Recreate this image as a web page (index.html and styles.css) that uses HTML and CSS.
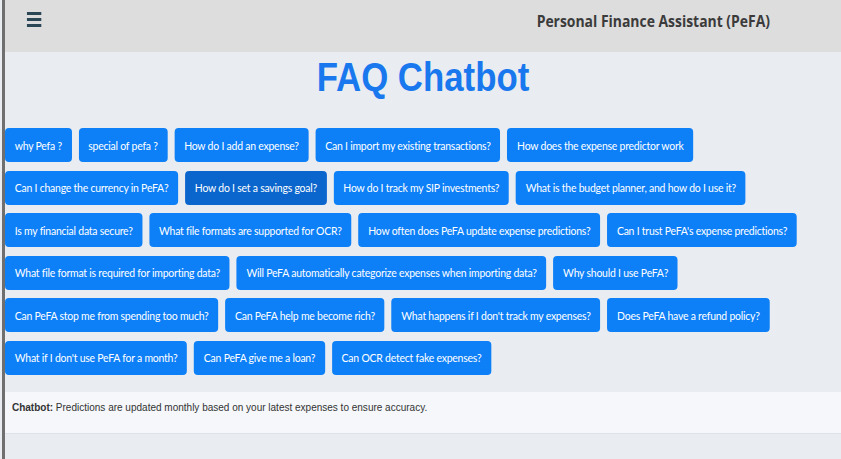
FILE: index.html
```html
<!DOCTYPE html>
<html lang="en">
<head>
<meta charset="utf-8">
<title>FAQ Chatbot</title>
<link rel="stylesheet" href="styles.css">
</head>
<body>
<div class="frame">
  <div class="page">
    <header class="topbar">
      <button class="menu" aria-label="Menu">
        <svg width="17" height="15" viewBox="0 0 17 15" preserveAspectRatio="none"><rect x="0" y="0" width="17" height="3" fill="#2b4654"/><rect x="0" y="6" width="17" height="3" fill="#2b4654"/><rect x="0" y="12" width="17" height="3" fill="#2b4654"/></svg>
      </button>
      <div class="brand">Personal Finance Assistant (PeFA)</div>
    </header>
    <main class="content">
      <h1 class="title">FAQ Chatbot</h1>
      <div class="faq">
        <button class="q">why Pefa ?</button>
        <button class="q">special of pefa ?</button>
        <button class="q">How do I add an expense?</button>
        <button class="q">Can I import my existing transactions?</button>
        <button class="q">How does the expense predictor work</button>
        <button class="q">Can I change the currency in PeFA?</button>
        <button class="q active">How do I set a savings goal?</button>
        <button class="q">How do I track my SIP investments?</button>
        <button class="q">What is the budget planner, and how do I use it?</button>
        <button class="q">Is my financial data secure?</button>
        <button class="q">What file formats are supported for OCR?</button>
        <button class="q">How often does PeFA update expense predictions?</button>
        <button class="q">Can I trust PeFA's expense predictions?</button>
        <button class="q">What file format is required for importing data?</button>
        <button class="q">Will PeFA automatically categorize expenses when importing data?</button>
        <button class="q">Why should I use PeFA?</button>
        <button class="q">Can PeFA stop me from spending too much?</button>
        <button class="q">Can PeFA help me become rich?</button>
        <button class="q">What happens if I don't track my expenses?</button>
        <button class="q">Does PeFA have a refund policy?</button>
        <button class="q">What if I don't use PeFA for a month?</button>
        <button class="q">Can PeFA give me a loan?</button>
        <button class="q">Can OCR detect fake expenses?</button>
      </div>
      <div class="response"><b>Chatbot:</b> Predictions are updated monthly based on your latest expenses to ensure accuracy.</div>
    </main>
  </div>
</div>
</body>
</html>
```
FILE: styles.css
```css
html, body {
  margin: 0;
  padding: 0;
  height: 100%;
}
body {
  background: #e9edf2;
  font-family: "Liberation Sans", Arial, sans-serif;
  overflow: hidden;
}
.frame {
  margin-left: 2px;
  border-left: 3px solid #6f6f6f;
  min-height: 100%;
  box-sizing: border-box;
  overflow: hidden;
}
/* the whole view is rendered slightly condensed horizontally */
.page {
  width: calc(100% / 0.87);
  transform: scaleX(0.87);
  transform-origin: 0 0;
}
.topbar {
  height: 52px;
  background: #dddddd;
  display: flex;
  align-items: center;
  padding: 0 81.6px 0 25.3px;
  box-sizing: border-box;
}
.menu {
  background: none;
  border: 0;
  padding: 0;
  width: 17px;
  height: 15px;
  display: flex;
  margin-top: -13px;
}
.brand {
  margin-left: auto;
  font-family: "Open Sans", sans-serif;
  font-weight: 700;
  font-size: 16px;
  color: #3b3b3b;
  margin-top: -10px;
}
.content {
  display: flex;
  flex-direction: column;
}
.title {
  margin: 2px 0 28px;
  text-align: center;
  font-size: 40px;
  line-height: 46px;
  font-weight: 700;
  color: #1a78ee;
}
.faq {
  display: flex;
  flex-wrap: wrap;
  gap: 8.5px 8px;
  padding-right: 40px;
}
.q {
  height: 34px;
  padding: 0 11.2px;
  border: 0;
  border-radius: 4.6px / 4px;
  background: #0d7ff7;
  color: #fff;
  font-family: Lato, "Open Sans", sans-serif;
  font-size: 12px;
  letter-spacing: -0.25px;
}
.q.active {
  background: #0a66cc;
}
.response {
  margin-top: 17px;
  height: 42px;
  box-sizing: border-box;
  padding: 9px 8px;
  background: #f5f7fa;
  border-bottom: 1px solid #dfe3e9;
  font-size: 11.5px;
  color: #333;
}
```
